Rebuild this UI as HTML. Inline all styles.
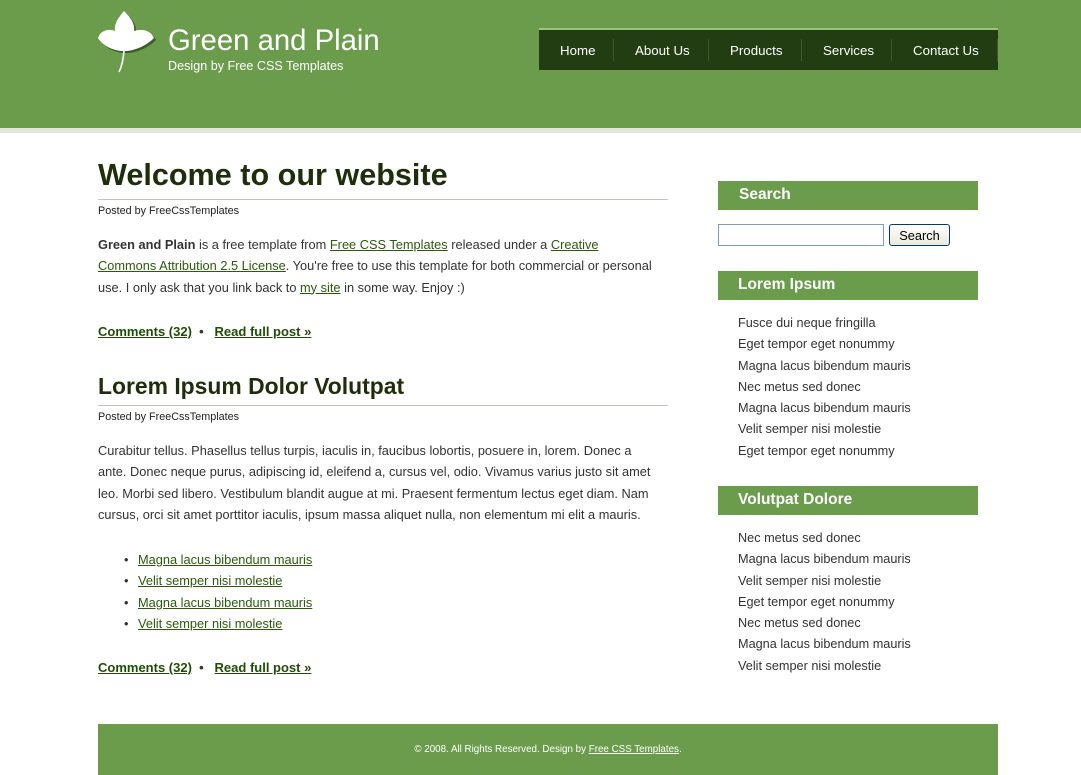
<!DOCTYPE html>
<html><head><meta charset="utf-8"><style>
*{margin:0;padding:0;box-sizing:border-box}
body{width:1081px;height:775px;background:#fff;font-family:"Liberation Sans",Arial,Helvetica,sans-serif;position:relative;overflow:hidden;color:#333}
.abs{position:absolute}
#hdr{left:0;top:0;width:1081px;height:128px;background:#6a9c4c}
#stripe{left:0;top:128px;width:1081px;height:5px;background:#e4e5dc}
#logo h1{font-weight:normal;font-size:29.3px;color:#fff;position:absolute;left:168px;top:24px;white-space:nowrap}
#logo p{font-size:12.6px;color:#fff;position:absolute;left:168px;top:59px;white-space:nowrap}
#nav{left:539px;top:28px;width:459px;height:42px;background:#233d12;border-top:2px solid #9cc47e}
#nav a{position:absolute;top:13px;color:#fff;font-size:13.3px;text-decoration:none;white-space:nowrap}
.sep{position:absolute;top:9px;width:1px;height:22px;background:#3b5a25}
h2.t{position:absolute;left:98px;color:#1f2e0a;font-weight:bold;white-space:nowrap}
.line{position:absolute;left:98px;width:570px;height:1px;background:#c4c4b8}
.by{position:absolute;left:98px;font-size:10.8px;color:#222}
.p{position:absolute;left:98px;font-size:12.8px;line-height:21.3px;color:#333;white-space:nowrap}
a{color:#2a5a0a}
.meta{position:absolute;left:98px;font-size:13px;font-weight:bold;color:#333;white-space:nowrap}
.meta a{color:#1f4d06}
ul.l{position:absolute;left:124px;font-size:12.8px;list-style:none}
ul.l li{line-height:21.3px}
ul.l li:before{content:"•";position:absolute;left:0}
ul.l li a{margin-left:14px}
.sh{position:absolute;left:718px;width:260px;height:29px;background:#6a9c4c;color:#fff;font-weight:bold;font-size:15.5px;padding:5px 0 0 20px}
.sl{position:absolute;left:738px;font-size:12.7px;color:#333;list-style:none}
.sl li{line-height:21.3px}
#foot{left:98px;top:724px;width:900px;height:51px;background:#6a9c4c;color:#fff;font-size:9.8px;text-align:center;padding-top:20px}
#foot a{color:#fff}
</style></head><body>
<div id="hdr" class="abs"></div>
<div id="stripe" class="abs"></div>
<svg class="abs" style="left:96px;top:8px" width="62" height="68" viewBox="96 8 62 68">
<path d="M124 11 C118 18 114 24 115 31 C108 28 100 31 98 38 C103 46 112 50 121 51 L127 51 C136 50 146 46 154 38 C151 31 143 28 134 31 C135 24 131 18 124 11 Z" fill="#3d5e2a" transform="translate(2,2)"/>
<path d="M124 11 C118 18 114 24 115 31 C108 28 100 31 98 38 C103 46 112 50 121 51 L127 51 C136 50 146 46 154 38 C151 31 143 28 134 31 C135 24 131 18 124 11 Z" fill="#fff"/>
<path d="M124 51 C123 60 122 66 119 72" stroke="#fff" stroke-width="1.6" fill="none"/>
</svg>
<div id="logo"><h1>Green and Plain</h1><p>Design by Free CSS Templates</p></div>
<div id="nav" class="abs">
<a style="left:21px">Home</a><div class="sep" style="left:74px"></div>
<a style="left:96px">About Us</a><div class="sep" style="left:169px"></div>
<a style="left:191px">Products</a><div class="sep" style="left:262px"></div>
<a style="left:284px">Services</a><div class="sep" style="left:352px"></div>
<a style="left:374px">Contact Us</a><div class="sep" style="left:458px"></div>
</div>

<h2 class="t" style="top:158px;font-size:30.6px">Welcome to our website</h2>
<div class="line" style="top:199px"></div>
<div class="by" style="top:205px">Posted by FreeCssTemplates</div>
<div class="p" style="top:234px"><b>Green and Plain</b> is a free template from <a href="#">Free CSS Templates</a> released under a <a href="#">Creative</a><br><a href="#">Commons Attribution 2.5 License</a>. You're free to use this template for both commercial or personal<br>use. I only ask that you link back to <a href="#">my site</a> in some way. Enjoy :)</div>
<div class="meta" style="top:324px"><a href="#">Comments (32)</a> &nbsp;•&nbsp;&nbsp; <a href="#">Read full post »</a></div>

<h2 class="t" style="top:373px;font-size:22.9px">Lorem Ipsum Dolor Volutpat</h2>
<div class="line" style="top:405px"></div>
<div class="by" style="top:411px">Posted by FreeCssTemplates</div>
<div class="p" style="top:440px">Curabitur tellus. Phasellus tellus turpis, iaculis in, faucibus lobortis, posuere in, lorem. Donec a<br>ante. Donec neque purus, adipiscing id, eleifend a, cursus vel, odio. Vivamus varius justo sit amet<br>leo. Morbi sed libero. Vestibulum blandit augue at mi. Praesent fermentum lectus eget diam. Nam<br>cursus, orci sit amet porttitor iaculis, ipsum massa aliquet nulla, non elementum mi elit a mauris.</div>
<ul class="l" style="top:549px">
<li><a href="#">Magna lacus bibendum mauris</a></li>
<li><a href="#">Velit semper nisi molestie</a></li>
<li><a href="#">Magna lacus bibendum mauris</a></li>
<li><a href="#">Velit semper nisi molestie</a></li>
</ul>
<div class="meta" style="top:660px"><a href="#">Comments (32)</a> &nbsp;•&nbsp;&nbsp; <a href="#">Read full post »</a></div>

<div class="sh" style="top:181px;padding-left:21px">Search</div>
<div class="abs" style="left:718px;top:224px;width:166px;height:22px;border:1px solid #7f9db9;background:#fff"></div>
<div class="abs" style="left:889px;top:224px;width:61px;height:22px;border:1px solid #003c74;border-radius:3px;background:linear-gradient(#fff,#ece9d8);font-size:12.8px;color:#000;text-align:center;padding-top:3px">Search</div>

<div class="sh" style="top:271px">Lorem Ipsum</div>
<ul class="sl" style="top:313px">
<li>Fusce dui neque fringilla</li><li>Eget tempor eget nonummy</li><li>Magna lacus bibendum mauris</li><li>Nec metus sed donec</li><li>Magna lacus bibendum mauris</li><li>Velit semper nisi molestie</li><li>Eget tempor eget nonummy</li>
</ul>
<div class="sh" style="top:486px">Volutpat Dolore</div>
<ul class="sl" style="top:528px">
<li>Nec metus sed donec</li><li>Magna lacus bibendum mauris</li><li>Velit semper nisi molestie</li><li>Eget tempor eget nonummy</li><li>Nec metus sed donec</li><li>Magna lacus bibendum mauris</li><li>Velit semper nisi molestie</li>
</ul>

<div id="foot" class="abs">© 2008. All Rights Reserved. Design by <a href="#">Free CSS Templates</a>.</div>
</body></html>
